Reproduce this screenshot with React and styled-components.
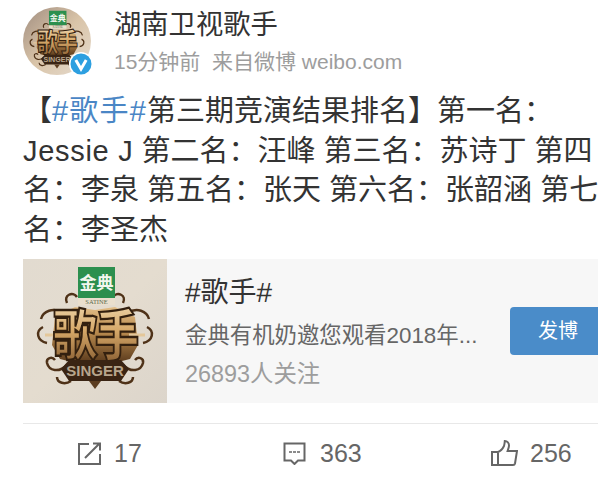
import React from 'react';
import styled, { createGlobalStyle } from 'styled-components';

const GlobalStyle = createGlobalStyle`
  html, body {
    margin: 0;
    padding: 0;
    background: #fff;
    overflow: hidden;
  }
  body {
    font-family: "Liberation Sans", "Noto Sans CJK SC", sans-serif;
  }
`;

const Page = styled.div`
  width: 598px;
  height: 481px;
  overflow: hidden;
  padding-left: 23px;
  box-sizing: border-box;
`;

const Header = styled.header`
  display: flex;
  gap: 23px;
  padding-top: 7px;
  height: 76px;
  box-sizing: border-box;
`;

const AvatarWrap = styled.div`
  position: relative;
  width: 68px;
  height: 68px;
  flex: none;
`;

const AvatarClip = styled.div`
  width: 68px;
  height: 68px;
  border-radius: 50%;
  overflow: hidden;
`;

const Badge = styled.svg`
  position: absolute;
  right: -2px;
  bottom: -1px;
`;

const HeaderText = styled.div`
  display: flex;
  flex-direction: column;
`;

const Name = styled.div`
  font-size: 27.3px;
  line-height: 36px;
  color: #333;
`;

const Meta = styled.div`
  margin-top: 4px;
  font-size: 21px;
  line-height: 30px;
  color: #9d9d9d;
  white-space: pre;
`;

const Body = styled.p`
  margin: 16px 0 0;
  font-size: 29px;
  line-height: 39.5px;
  color: #333;
  width: 580px;
`;

const Tag = styled.span`
  color: #4a86c5;
  letter-spacing: 1.2px;
`;

const Latin = styled.span`
  letter-spacing: 0.7px;
`;

const Card = styled.section`
  display: flex;
  align-items: stretch;
  height: 144px;
  margin-top: 9px;
  background: #f7f7f7;
`;

const Thumb = styled.div`
  width: 144px;
  flex: none;
`;

const CardText = styled.div`
  flex: 1;
  min-width: 0;
  padding: 17px 0 0 18px;
  display: flex;
  flex-direction: column;
`;

const CardTitle = styled.div`
  font-size: 28px;
  line-height: 34px;
  color: #333;
`;

const CardDesc = styled.div`
  margin-top: 10px;
  font-size: 22.4px;
  line-height: 32px;
  color: #666;
  white-space: nowrap;
`;

const CardFollow = styled.div`
  margin-top: 6px;
  font-size: 23.4px;
  line-height: 32px;
  color: #9d9d9d;
`;

const PostButton = styled.div`
  width: 88px;
  height: 48px;
  flex: none;
  align-self: center;
  background: #4a8cc9;
  border-radius: 4px 0 0 4px;
  color: #fff;
  font-size: 20px;
  line-height: 48px;
  padding-left: 28px;
  box-sizing: border-box;
`;

const Footer = styled.footer`
  margin-top: 20px;
  border-top: 1px solid #e8e8e8;
  height: 58px;
  display: grid;
  grid-template-columns: 205px 208px 1fr;
  align-items: center;
  padding-left: 55px;
`;

const Action = styled.div`
  display: flex;
  align-items: center;
  gap: ${p => p.$gap}px;
  font-size: 25px;
  color: #666;
  line-height: 30px;
`;

const LogoArt = ({ size, id, round }) => (
  <svg width={size} height={size} viewBox="0 0 144 144" style={{ display: 'block' }}>
    <defs>
      <linearGradient id={`${id}bg`} x1="0" y1="0" x2="1" y2="1">
        <stop offset="0" stopColor={round ? '#a08d80' : '#e2dbd0'} />
        <stop offset="0.5" stopColor={round ? '#d9c4a8' : '#e4dccf'} />
        <stop offset="1" stopColor={round ? '#e6dcd0' : '#dcd5cb'} />
      </linearGradient>
      <linearGradient id={`${id}gold`} x1="0" y1="0" x2="0" y2="1">
        <stop offset="0" stopColor="#e2bd86" />
        <stop offset="0.45" stopColor="#b98a4e" />
        <stop offset="1" stopColor="#5a3a1c" />
      </linearGradient>
      <linearGradient id={`${id}text`} x1="0" y1="0" x2="0" y2="1">
        <stop offset="0" stopColor="#f8e8c6" />
        <stop offset="0.5" stopColor="#d6a868" />
        <stop offset="1" stopColor="#7a5028" />
      </linearGradient>
    </defs>
    <rect width="144" height="144" fill={`url(#${id}bg)`} />
    <g fill="none" stroke="#4f3218" strokeWidth="2.5">
      <path d="M44 44c-4-8 6-12 10-6M100 44c4-8-6-12-10-6" />
      <path d="M40 54c-10-6-20-2-22 6M104 54c10-6 20-2 22 6" />
      <path d="M24 84c-10-2-12-12-4-16M120 84c10-2 12-12 4-16" />
      <path d="M44 106c-8 8-18 6-20-2-1-5 5-7 8-3M100 106c8 8 18 6 20-2 1-5-5-7-8-3" />
      <path d="M48 122c-6 4-14 2-14-4M96 122c6 4 14 2 14-4" />
    </g>
    <path d="M32 58l20-10 20 3 20-3 20 10 3 28-8 14-16 4H53l-16-4-8-14z" fill={`url(#${id}gold)`} />
    <path d="M22 76h16M106 76h16" stroke="#e4c79a" strokeWidth="3" />
    <rect x="55" y="8" width="37" height="31" fill="#2c8f4e" />
    <rect x="55" y="39" width="37" height="7" fill="#eadfcd" />
    <text x="73.5" y="30" textAnchor="middle" fontSize="17" fontWeight="700" fill="#f2f6ee"
      fontFamily="'Noto Sans CJK SC', sans-serif">金典</text>
    <text x="73.5" y="45" textAnchor="middle" fontSize="6.5" fill="#5a6b50"
      fontFamily="'Liberation Serif', serif">SATINE</text>
    <g transform="translate(72 96) scale(1 1.25)">
      <text x="0" y="0" textAnchor="middle" fontSize="44" fontWeight="900" letterSpacing="-2"
        fill={`url(#${id}text)`} stroke="#33200f" strokeWidth="1.8"
        fontFamily="'Noto Sans CJK SC', sans-serif">歌手</text>
    </g>
    <path d="M46 101h52l8 9-8 12H46l-8-12z" fill="#3a2413" />
    <text x="72" y="117" textAnchor="middle" fontSize="15" fontWeight="700" fill="#b7a58c"
      fontFamily="'Liberation Sans', sans-serif">SINGER</text>
    <path d="M72 130l-6-8h12z" fill="#5c3d20" />
  </svg>
);

const VBadge = () => (
  <Badge width="24" height="24" viewBox="0 0 24 24">
    <circle cx="12" cy="12" r="12" fill="#fff" />
    <circle cx="12" cy="12" r="10.5" fill="#2d9fe0" />
    <path d="M6.8 8l5.2 9 5.2-9" fill="none" stroke="#fff" strokeWidth="3" />
  </Badge>
);

const ShareIcon = () => (
  <svg width="24" height="23" viewBox="0 0 24 23" fill="none" stroke="#666" strokeWidth="2">
    <path d="M11 2H1v20h21V12" />
    <path d="M7 16L21 2M15 1.5h7v7" />
  </svg>
);

const CommentIcon = () => (
  <svg width="23" height="23" viewBox="0 0 23 23" fill="none" stroke="#666" strokeWidth="2">
    <path d="M1.5 1.5h20v17h-6.5l-3.5 3.5-3.5-3.5H1.5z" />
    <path d="M6 10h3M10 10h3M14 10h3" strokeWidth="1.5" />
  </svg>
);

const LikeIcon = () => (
  <svg width="27" height="26" viewBox="0 0 27 26" fill="none" stroke="#666" strokeWidth="2">
    <path d="M1 12h6v13H1zM7 12c3-1 5-4 6-6 .6-2 .6-3 .8-5 2.6 0 4.2 2 4.2 4.5 0 2-.8 3.5-1.4 5.5H26l-2 12.5c-.2 1-1 1.5-2 1.5H7" />
  </svg>
);

export default function App() {
  return (
    <Page>
      <GlobalStyle />
      <Header>
        <AvatarWrap>
          <AvatarClip>
            <LogoArt size={68} id="a" round />
          </AvatarClip>
          <VBadge />
        </AvatarWrap>
        <HeaderText>
          <Name>湖南卫视歌手</Name>
          <Meta>15分钟前  来自微博 weibo.com</Meta>
        </HeaderText>
      </Header>
      <Body>
        【<Tag>#歌手#</Tag>第三期竞演结果排名】第一名：<Latin>Jessie J</Latin> 第二名：汪峰 第三名：苏诗丁 第四名：李泉 第五名：张天 第六名：张韶涵 第七名：李圣杰
      </Body>
      <Card>
        <Thumb>
          <LogoArt size={144} id="b" />
        </Thumb>
        <CardText>
          <CardTitle>#歌手#</CardTitle>
          <CardDesc>金典有机奶邀您观看2018年...</CardDesc>
          <CardFollow>26893人关注</CardFollow>
        </CardText>
        <PostButton>发博</PostButton>
      </Card>
      <Footer>
        <Action $gap={12}><ShareIcon />17</Action>
        <Action $gap={14}><CommentIcon />363</Action>
        <Action $gap={12}><LikeIcon />256</Action>
      </Footer>
    </Page>
  );
}
